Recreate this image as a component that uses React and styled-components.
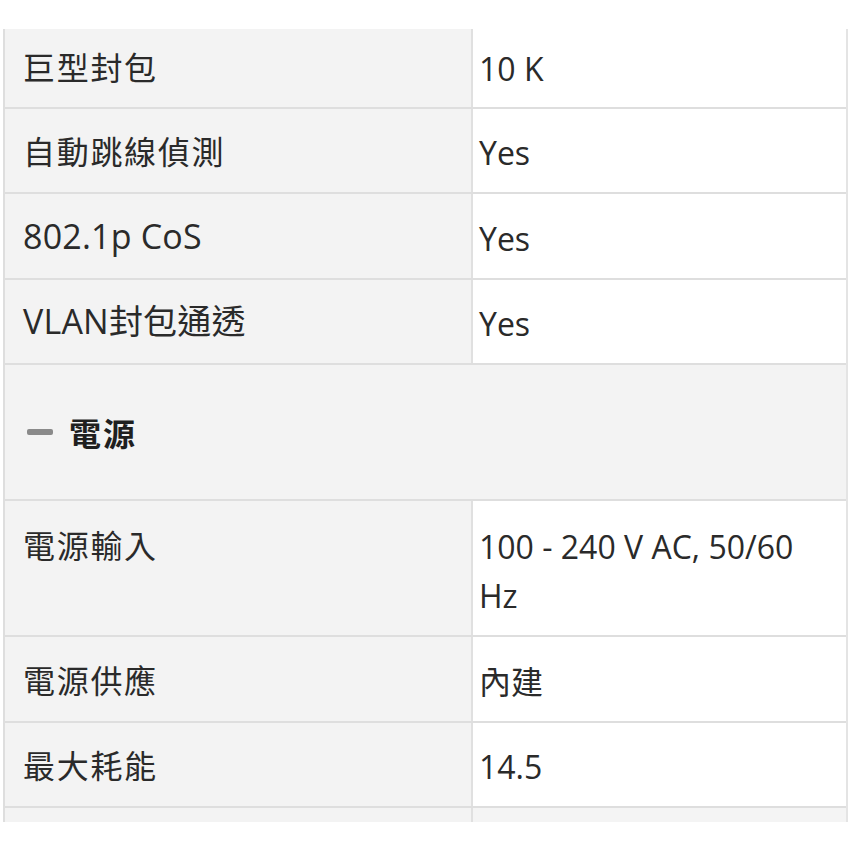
import React from "react";
import styled, { createGlobalStyle } from "styled-components";

const Global = createGlobalStyle`
  html, body { margin: 0; padding: 0; background: #ffffff; }
  body { font-family: "Open Sans", "Noto Sans CJK TC", sans-serif; color: #2b2b2b; }
`;

const Page = styled.div`
  width: 850px;
  height: 850px;
  overflow: hidden;
  padding-top: 29px;
  padding-left: 3px;
  box-sizing: border-box;
`;

const Table = styled.div`
  width: 845px;
  height: 793px;
  overflow: hidden;
  border-left: 2px solid #dedede;
  border-right: 2px solid #e4e4e4;
  box-sizing: border-box;
  display: flex;
  flex-direction: column;
`;

const Row = styled.div`
  display: grid;
  grid-template-columns: 468px 1fr;
  border-bottom: 2px solid #dedede;
  flex-shrink: 0;
`;

const Label = styled.div`
  background: #f3f3f3;
  border-right: 2px solid #e0e0e0;
  padding: ${(p) => p.$pt}px 16px ${(p) => p.$pb}px 18px;
  font-family: "Noto Sans CJK TC", "Open Sans", sans-serif;
  font-size: 32px;
  line-height: 49px;
  letter-spacing: 1.7px;
  color: #2a2a2a;
  ${(p) =>
    p.$latin &&
    `font-family: "Open Sans", "Noto Sans CJK TC", sans-serif; font-size: 34px; letter-spacing: 0.2px;`}
`;

const Value = styled.div`
  background: ${(p) => (p.$gray ? "#f4f4f4" : "#ffffff")};
  padding: ${(p) => p.$pt + 2}px 12px ${(p) => p.$pb - 2}px 6px;
  font-family: "Open Sans", "Noto Sans CJK TC", sans-serif;
  font-size: 32px;
  line-height: 49px;
  color: #2a2a2a;
`;

const Section = styled.div`
  background: #f3f3f3;
  border-bottom: 2px solid #dedede;
  height: 134px;
  display: flex;
  align-items: center;
  gap: 16px;
  padding-left: 22px;
  flex-shrink: 0;
`;

const Dash = styled.span`
  width: 26px;
  height: 6px;
  border-radius: 2px;
  background: #8a8a8a;
`;

const SectionTitle = styled.span`
  font-family: "Noto Sans CJK TC", sans-serif;
  font-weight: 700;
  font-size: 32px;
  letter-spacing: 2px;
  color: #1f1f1f;
`;

const rowsTop = [
  { label: "巨型封包", value: "10 K", pt: 13, pb: 16 },
  { label: "自動跳線偵測", value: "Yes", pt: 17, pb: 17 },
  { label: "802.1p CoS", value: "Yes", pt: 18, pb: 17, latin: true },
  { label: "VLAN封包通透", value: "Yes", pt: 17, pb: 17, latin: true },
];

const rowsBottom = [
  { label: "電源輸入", value: "100 - 240 V AC, 50/60 Hz", pt: 19, pb: 17 },
  { label: "電源供應", value: "內建", pt: 18, pb: 17 },
  { label: "最大耗能", value: "14.5", pt: 17, pb: 17 },
];

function DataRow({ r }) {
  return (
    <Row>
      <Label $pt={r.pt} $pb={r.pb} $latin={r.latin}>
        {r.label}
      </Label>
      <Value $pt={r.pt} $pb={r.pb}>
        {r.value}
      </Value>
    </Row>
  );
}

export default function App() {
  return (
    <>
      <Global />
      <Page>
        <Table>
          {rowsTop.map((r) => (
            <DataRow key={r.label} r={r} />
          ))}
          <Section>
            <Dash />
            <SectionTitle>電源</SectionTitle>
          </Section>
          {rowsBottom.map((r) => (
            <DataRow key={r.label} r={r} />
          ))}
          <Row>
            <Label $pt={17} $pb={17}>&nbsp;</Label>
            <Value $pt={17} $pb={17} $gray>&nbsp;</Value>
          </Row>
        </Table>
      </Page>
    </>
  );
}
